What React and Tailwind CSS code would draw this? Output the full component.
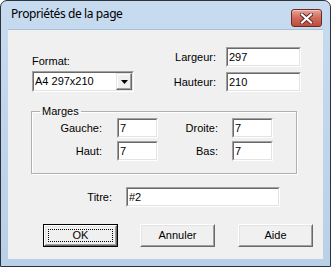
import React from "react";

const sans = "font-['Liberation_Sans',Arial,sans-serif]";

function Edit({ w, value }) {
  return (
    <div className={`h-[20px] ${w} border border-t-[#a0a0a0] border-l-[#a0a0a0] border-b-white border-r-white`}>
      <div className="h-full border border-t-[#696969] border-l-[#696969] border-b-[#e3e3e3] border-r-[#e3e3e3] bg-white pl-[1px] leading-[16px] text-black">
        {value}
      </div>
    </div>
  );
}

function Combo({ value }) {
  return (
    <div className="h-[21px] w-[102px] border border-t-[#a0a0a0] border-l-[#a0a0a0] border-b-white border-r-white">
      <div className="flex h-full border border-t-[#696969] border-l-[#696969] border-b-[#e3e3e3] border-r-[#e3e3e3] bg-white">
        <div className="flex-1 pl-[1px] leading-[17px] text-black">{value}</div>
        <div className="flex h-full w-[16px] items-center justify-center border border-t-[#e3e3e3] border-l-[#e3e3e3] border-b-[#696969] border-r-[#696969] bg-[#f0f0f0] shadow-[inset_-1px_-1px_0_#a0a0a0,inset_1px_1px_0_#fff]">
          <svg width="7" height="4" viewBox="0 0 7 4">
            <path d="M0 0h7L3.5 4z" fill="#000" />
          </svg>
        </div>
      </div>
    </div>
  );
}

function Btn({ label, def, className = "" }) {
  const raised = (
    <div className="h-full border border-t-white border-l-white border-b-[#696969] border-r-[#696969]">
      <div className="flex h-full items-center justify-center border border-t-[#e3e3e3] border-l-[#e3e3e3] border-b-[#a0a0a0] border-r-[#a0a0a0] bg-[#f0f0f0] p-[2px]">
        {def ? (
          <div className="flex h-full w-full items-center justify-center border border-dotted border-black leading-[13px]">
            {label}
          </div>
        ) : (
          <span className="leading-[13px]">{label}</span>
        )}
      </div>
    </div>
  );
  return (
    <div className={`h-[23px] w-[75px] ${def ? "border border-black" : ""} ${className}`}>
      {raised}
    </div>
  );
}

export default function App() {
  return (
    <div className="h-[267px] w-[331px] bg-white">
      <div className={`flex h-[267px] w-[331px] flex-col rounded-t-[7px] border border-[#2c333b] bg-gradient-to-b from-[#c7dbf0] to-[#b9d0e9] px-[7px] pb-[7px] ${sans} text-[11px] text-black`}>
        <div className="flex h-[28px] items-start">
          <div className="ml-[3px] mt-[5px] font-['Noto_Sans',sans-serif] text-[12px] leading-[16px] tracking-[-0.4px] text-black">
            Propriétés de la page
          </div>
          <div className="ml-auto mr-[1px] mt-[8px] flex h-[18px] w-[31px] items-center justify-center rounded-[3px] border border-[#6b2b24] bg-gradient-to-b from-[#e8a497] via-[#cf6a5c] to-[#c24a38] shadow-[inset_0_1px_0_#f3c6bd]">
            <svg width="13" height="11" viewBox="0 0 13 11">
              <path d="M2 1.5l9 8M11 1.5l-9 8" stroke="#5a2520" strokeWidth="4" strokeLinecap="square" />
              <path d="M2 1.5l9 8M11 1.5l-9 8" stroke="#fff" strokeWidth="2.2" strokeLinecap="square" />
            </svg>
          </div>
        </div>
        <div className="flex-1 border-t border-[#a9c0d9] bg-[#f0f0f0]">
          <div className="flex h-[62px]">
            <div className="ml-[24px] mt-[25px] flex flex-col gap-[3px]">
              <span className="leading-[13px]">Format:</span>
              <Combo value="A4 297x210" />
            </div>
            <div className="ml-auto mr-[22px] mt-[17px] flex flex-col gap-[5px]">
              <div className="flex items-center justify-end gap-[10px]">
                <span>Largeur:</span>
                <Edit w="w-[75px]" value="297" />
              </div>
              <div className="flex items-center justify-end gap-[10px]">
                <span>Hauteur:</span>
                <Edit w="w-[75px]" value="210" />
              </div>
            </div>
          </div>
          <fieldset className="ml-[23px] mt-[13px] h-[69px] w-[266px] border border-[#b0b0b0] shadow-[inset_1px_1px_0_#fff,1px_1px_0_#fff]">
            <legend className="ml-[8px] px-[2px] leading-[13px]">Marges</legend>
            <div className="flex flex-col gap-[3px]">
              <div className="flex items-center">
                <span className="w-[70px] text-right">Gauche:</span>
                <div className="ml-[15px]"><Edit w="w-[41px]" value="7" /></div>
                <span className="w-[60px] text-right">Droite:</span>
                <div className="ml-[14px]"><Edit w="w-[41px]" value="7" /></div>
              </div>
              <div className="flex items-center">
                <span className="w-[70px] text-right">Haut:</span>
                <div className="ml-[15px]"><Edit w="w-[41px]" value="7" /></div>
                <span className="w-[60px] text-right">Bas:</span>
                <div className="ml-[14px]"><Edit w="w-[41px]" value="7" /></div>
              </div>
            </div>
          </fieldset>
          <div className="mt-[13px] flex items-center">
            <span className="w-[104px] text-right">Titre:</span>
            <div className="ml-[14px]"><Edit w="w-[154px]" value="#2" /></div>
          </div>
          <div className="ml-[35px] mt-[17px] flex">
            <Btn label="OK" def />
            <Btn label="Annuler" className="ml-[22px]" />
            <Btn label="Aide" className="ml-[23px]" />
          </div>
        </div>
      </div>
    </div>
  );
}
